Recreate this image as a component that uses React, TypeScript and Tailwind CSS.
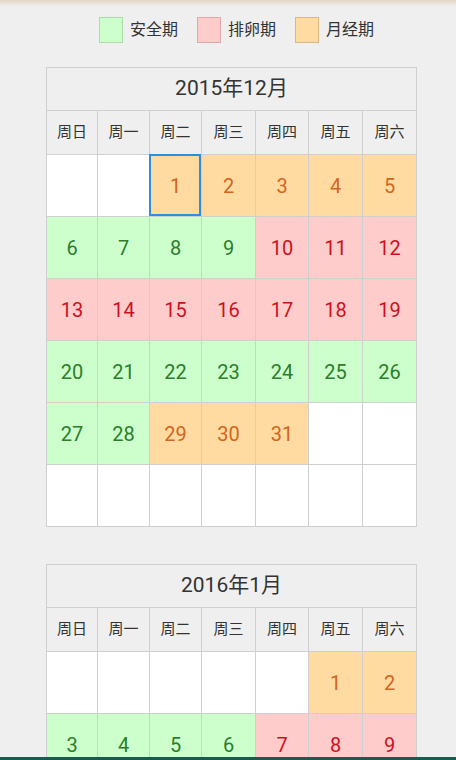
import React from 'react';

type Status = 'safe' | 'ovul' | 'period' | 'none';

const colWidths = ['w-[51px]', 'w-[52px]', 'w-[52px]', 'w-[54px]', 'w-[53px]', 'w-[54px]', 'w-[54px]'];
const weekdays = ['周日', '周一', '周二', '周三', '周四', '周五', '周六'];

const cellStyles: Record<Status, string> = {
  safe: 'bg-[#ccffcc] text-[#2c7d2c]',
  ovul: 'bg-[#ffcccc] text-[#cc1122]',
  period: 'bg-[#ffdba1] text-[#d2661e]',
  none: 'bg-white',
};

function decStatus(d: number): Status {
  if (d <= 5) return 'period';
  if (d <= 9) return 'safe';
  if (d <= 19) return 'ovul';
  if (d <= 28) return 'safe';
  return 'period';
}

function janStatus(d: number): Status {
  if (d <= 2) return 'period';
  if (d <= 6) return 'safe';
  if (d <= 16) return 'ovul';
  if (d <= 25) return 'safe';
  return 'period';
}

function Month({
  title,
  offset,
  days,
  status,
  selected,
}: {
  title: string;
  offset: number;
  days: number;
  status: (d: number) => Status;
  selected?: number;
}) {
  const cells: (number | null)[] = [];
  for (let i = 0; i < offset; i++) cells.push(null);
  for (let d = 1; d <= days; d++) cells.push(d);
  while (cells.length < 42) cells.push(null);

  const rows: (number | null)[][] = [];
  for (let i = 0; i < 42; i += 7) rows.push(cells.slice(i, i + 7));

  return (
    <div className="ml-[46px] w-[371px] border-l border-t border-[#cfcfcf]">
      <div className="h-[43px] bg-[#efefef] border-r border-b border-[#cfcfcf] flex items-center justify-center text-[21px] text-[#333]">
        {title}
      </div>
      <div className="flex">
        {weekdays.map((w, i) => (
          <div
            key={w}
            className={`${colWidths[i]} h-[44px] bg-[#efefef] border-r border-b border-[#cfcfcf] flex items-center justify-center text-[15px] text-[#333]`}
          >
            {w}
          </div>
        ))}
      </div>
      {rows.map((row, ri) => (
        <div key={ri} className="flex">
          {row.map((d, ci) => {
            const s: Status = d ? status(d) : 'none';
            return (
              <div
                key={ci}
                className={`${colWidths[ci]} h-[62px] border-r border-b border-[#cfcfcf] ${cellStyles[s]} relative flex items-center justify-center text-[20px]`}
              >
                {d}
                {d === selected && (
                  <div className="absolute -left-px -top-px w-[calc(100%+1px)] h-[calc(100%+1px)] border-2 border-[#2b8fe0]" />
                )}
              </div>
            );
          })}
        </div>
      ))}
    </div>
  );
}

function Legend({ color, border, label }: { color: string; border: string; label: string }) {
  return (
    <div className="flex items-center">
      <div className={`w-[24px] h-[26px] border ${color} ${border}`} />
      <span className="ml-[7px] text-[16px] text-[#333]">{label}</span>
    </div>
  );
}

export default function App() {
  return (
    <div
      className="min-h-[760px] bg-[#efefef] relative overflow-hidden"
      style={{ fontFamily: 'Roboto, "Noto Sans CJK SC", sans-serif' }}
    >
      <div className="h-[6px] bg-gradient-to-b from-[#e3d6c4] to-[#efefef]" />
      <div className="flex gap-[19px] mt-[11px] h-[26px] pl-[99px]">
        <Legend color="bg-[#ccffcc]" border="border-[#a8dca8]" label="安全期" />
        <Legend color="bg-[#ffcccc]" border="border-[#e0a8a8]" label="排卵期" />
        <Legend color="bg-[#ffdba1]" border="border-[#dcb880]" label="月经期" />
      </div>
      <div className="mt-[24px]">
        <Month title="2015年12月" offset={2} days={31} status={decStatus} selected={1} />
      </div>
      <div className="mt-[37px]">
        <Month title="2016年1月" offset={5} days={31} status={janStatus} />
      </div>
      <div className="fixed left-0 right-0 bottom-0 h-[3px] bg-[#1b5a4e]" />
    </div>
  );
}
